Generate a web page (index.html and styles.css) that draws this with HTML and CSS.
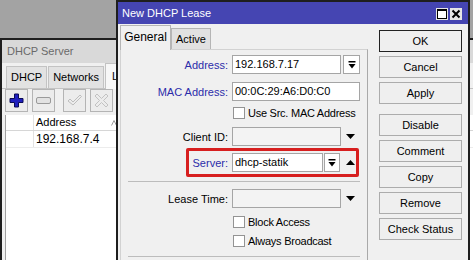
FILE: index.html
```html
<!DOCTYPE html>
<html lang="en">
<head>
  <meta charset="UTF-8">
  <meta name="viewport" content="width=device-width, initial-scale=1.0">
  <title>New DHCP Lease</title>
  <link rel="stylesheet" href="styles.css">
</head>
<body>
<div class="desktop">

  <!-- DHCP Server window, behind -->
  <div class="win server-win">
    <div class="server-title">DHCP Server</div>
    <div class="server-tabs">
      <div class="stab">DHCP</div>
      <div class="stab">Networks</div>
      <div class="stab stab-on">Leases</div>
    </div>
    <div class="server-body">
      <div class="toolbar">
        <span class="tbtn">
          <svg width="15" height="15" viewBox="0 0 15 15"><path d="M5.5 1h4v4.5H14v4H9.5V14h-4V9.5H1v-4h4.5z" fill="#1f1fbf" stroke="#0a0a55"/></svg>
        </span>
        <span class="tbtn">
          <svg width="15" height="7" viewBox="0 0 15 7"><rect x="0.5" y="0.5" width="14" height="6" rx="1.5" fill="#e2e2e2" stroke="#9a9a9a"/></svg>
        </span>
        <span class="tbtn tbtn-gap">
          <svg width="15" height="13" viewBox="0 0 15 13"><path d="M1 7l2-2 3 3 7-7 1.5 1.5L6 11z" fill="none" stroke="#bdbdbd"/></svg>
        </span>
        <span class="tbtn">
          <svg width="15" height="15" viewBox="0 0 15 15"><path d="M3 1l4.5 4.5L12 1l2 2-4.5 4.5L14 12l-2 2-4.5-4.5L3 14l-2-2 4.5-4.5L1 3z" fill="none" stroke="#c2c2c2"/></svg>
        </span>
      </div>
      <div class="grid">
        <div class="grid-head">
          <div class="cell c0"></div>
          <div class="cell c1">Address <svg class="sort" width="6" height="6" viewBox="0 0 6 6"><path d="M0.5 5.5L3 0.5l2.5 5" fill="none" stroke="#9c9c9c"/></svg></div>
          <div class="cell c2"></div>
          <div class="cell c2"></div>
          <div class="cell c2"></div>
          <div class="cell c5">Active Address</div>
        </div>
        <div class="grid-row">
          <div class="cell c0"></div>
          <div class="cell c1">192.168.7.4</div>
          <div class="cell c2"></div>
          <div class="cell c2"></div>
          <div class="cell c2"></div>
          <div class="cell c5"><span class="dot"></span></div>
        </div>
      </div>
    </div>
  </div>

  <!-- New DHCP Lease dialog -->
  <div class="win lease-win">
    <div class="lease-title">
      <span>New DHCP Lease</span>
      <span class="title-btns">
        <svg width="12" height="12" viewBox="0 0 12 12"><rect width="12" height="12" fill="#e6e6e6"/><rect x="1.5" y="1.5" width="9" height="9" fill="#fff" stroke="#000"/><rect x="1" y="1" width="10" height="2" fill="#000"/></svg>
        <svg width="12" height="12" viewBox="0 0 12 12"><rect width="12" height="12" fill="#e6e6e6"/><path d="M2.5 2.5l7 7M9.5 2.5l-7 7" stroke="#000" stroke-width="2"/></svg>
      </span>
    </div>

    <div class="lease-body">
      <div class="lease-main">
        <div class="tabs">
          <div class="tab tab-on">General</div>
          <div class="tab">Active</div>
        </div>

        <div class="panel">
          <div class="row">
            <span class="lbl blue">Address:</span>
            <div class="field">
              <div class="input w-mid">192.168.7.17</div>
              <span class="dd">
                <svg width="8" height="8" viewBox="0 0 8 8"><rect x="0.5" y="0" width="7" height="1.5"/><path d="M0.5 3h7L4 7.5z"/></svg>
              </span>
            </div>
          </div>

          <div class="row mt8">
            <span class="lbl blue">MAC Address:</span>
            <div class="field">
              <div class="input w-full">00:0C:29:A6:D0:C0</div>
            </div>
          </div>

          <div class="row mt2">
            <label class="check"><span class="box"></span>Use Src. MAC Address</label>
          </div>

          <div class="row mt5">
            <span class="lbl">Client ID:</span>
            <div class="field">
              <div class="input w-mid dim"></div>
              <span class="arrow"><svg width="9" height="5" viewBox="0 0 9 5"><path d="M0 0h9L4.5 5z"/></svg></span>
            </div>
          </div>

          <div class="row mt7 hl">
            <span class="lbl blue">Server:</span>
            <div class="field">
              <div class="input w-short">dhcp-statik</div>
              <span class="dd dd-tight">
                <svg width="8" height="8" viewBox="0 0 8 8"><rect x="0.5" y="0" width="7" height="1.5"/><path d="M0.5 3h7L4 7.5z"/></svg>
              </span>
              <span class="arrow arrow-wide"><svg width="9" height="5" viewBox="0 0 9 5"><path d="M0 5h9L4.5 0z"/></svg></span>
            </div>
          </div>

          <div class="sep mt9"></div>

          <div class="row mt7">
            <span class="lbl">Lease Time:</span>
            <div class="field">
              <div class="input w-mid dim"></div>
              <span class="arrow"><svg width="9" height="5" viewBox="0 0 9 5"><path d="M0 0h9L4.5 5z"/></svg></span>
            </div>
          </div>

          <div class="row mt4">
            <label class="check"><span class="box"></span>Block Access</label>
          </div>

          <div class="row">
            <label class="check"><span class="box"></span>Always Broadcast</label>
          </div>

          <div class="sep mt6"></div>
        </div>
      </div>

      <div class="actions">
        <button class="btn btn-default">OK</button>
        <button class="btn">Cancel</button>
        <button class="btn">Apply</button>
        <button class="btn btn-split">Disable</button>
        <button class="btn">Comment</button>
        <button class="btn">Copy</button>
        <button class="btn">Remove</button>
        <button class="btn">Check Status</button>
      </div>
    </div>
  </div>

</div>
</body>
</html>
```

FILE: styles.css
```css
body {
  margin: 0;
  font-family: "Liberation Sans", Arial, sans-serif;
  font-size: 11px;
  color: #000;
}
.desktop {
  position: relative;
  width: 473px;
  height: 260px;
  overflow: hidden;
  background: #a3a3a3;
}
.win {
  position: absolute;
  box-sizing: border-box;
  background: #f0f0f0;
}

/* DHCP Server window */
.server-win {
  left: 0;
  top: 38px;
  width: 560px;
  height: 240px;
  border: 2px solid #1e1e1e;
  border-right: none;
}
.server-title {
  height: 23px;
  line-height: 23px;
  padding-left: 5px;
  background: #d9d9d9;
  color: #6a6a6a;
}
.server-tabs {
  display: flex;
  align-items: flex-end;
  gap: 1px;
  height: 25px;
  padding-left: 4px;
}
.stab {
  box-sizing: border-box;
  height: 22px;
  line-height: 21px;
  padding: 0 4px;
  border: 1px solid #c3c3c3;
  border-bottom: none;
  background: #e2e2e2;
}
.stab-on {
  position: relative;
  height: 26px;
  line-height: 25px;
  margin-bottom: -1px;
  padding: 0 6px;
  background: #f7f7f7;
}
.server-body {
  border-top: 1px solid #c3c3c3;
  padding-left: 3px;
}
.toolbar {
  display: flex;
  gap: 4px;
  height: 23px;
}
.tbtn {
  box-sizing: border-box;
  width: 23px;
  height: 23px;
  display: flex;
  align-items: center;
  justify-content: center;
  border: 1px solid #b4b4b4;
  background: #ececec;
}
.tbtn-gap {
  margin-left: 4px;
}
.grid {
  margin-top: 3px;
  height: 200px;
  border-left: 1px solid #a0a0a0;
  background: #fff;
}
.grid-head,
.grid-row {
  display: flex;
}
.grid-head {
  height: 15px;
  border-bottom: 1px solid #d6d6d6;
}
.grid-row {
  height: 16px;
  border-bottom: 1px solid #ececec;
}
.cell {
  box-sizing: border-box;
  flex: none;
  padding-left: 2px;
  border-right: 1px solid #e2e2e2;
  white-space: nowrap;
  overflow: hidden;
  line-height: 15px;
}
.grid-row .cell {
  line-height: 16px;
  font-size: 12px;
}
.c0 { width: 28px; }
.c1 { width: 105px; position: relative; }
.c2 { width: 112px; }
.c5 { width: 120px; }
.sort {
  position: absolute;
  left: 77px;
  top: 5px;
}
.dot {
  display: inline-block;
  width: 8px;
  height: 8px;
  margin-top: 4px;
  border-radius: 50%;
  background: #3a6fc4;
}

/* New DHCP Lease dialog */
.lease-win {
  left: 116px;
  top: 0;
  width: 354px;
  height: 290px;
  border: 2px solid #1e1e1e;
}
.lease-title {
  display: flex;
  justify-content: space-between;
  align-items: center;
  height: 22px;
  padding: 0 6px 0 4px;
  background: #4545b2;
  color: #fff;
}
.title-btns {
  display: flex;
  gap: 2px;
  padding-top: 2px;
}
.lease-body {
  display: flex;
  gap: 11px;
  padding: 1px 6px 0 2px;
}
.lease-main {
  width: 248px;
}
.tabs {
  display: flex;
  align-items: flex-end;
  height: 24px;
}
.tab {
  box-sizing: border-box;
  width: 40px;
  height: 21px;
  line-height: 20px;
  text-align: center;
  border: 1px solid #b5b5b5;
  border-bottom: none;
  background: #e1e1e1;
}
.tab-on {
  position: relative;
  width: 51px;
  height: 25px;
  line-height: 22px;
  margin-bottom: -1px;
  background: #f0f0f0;
  font-size: 12px;
}
.panel {
  box-sizing: border-box;
  height: 240px;
  padding: 5px 7px 0 0;
  border: 1px solid #d2d2d2;
  border-right-color: #a9a9a9;
}
.row {
  position: relative;
  display: grid;
  grid-template-columns: 107px 128px;
  column-gap: 4px;
  align-items: center;
  height: 19px;
}
.lbl {
  text-align: right;
  white-space: nowrap;
}
.blue {
  color: #2c2caa;
}
.field {
  display: flex;
  align-items: center;
  height: 19px;
}
.input {
  box-sizing: border-box;
  height: 19px;
  padding: 0 2px;
  line-height: 17px;
  border: 1px solid #a5a5a5;
  background: #fff;
  white-space: nowrap;
  overflow: hidden;
}
.w-full { width: 128px; }
.w-mid { width: 109px; }
.w-short { width: 91px; }
.dim {
  background: #f3f3f3;
}
.dd {
  box-sizing: border-box;
  width: 17px;
  height: 19px;
  margin-left: 2px;
  display: flex;
  align-items: center;
  justify-content: center;
  border: 1px solid #a5a5a5;
  background: #fff;
}
.dd-tight {
  width: 16px;
  margin-left: 1px;
}
.arrow {
  width: 19px;
  display: flex;
  justify-content: center;
}
.arrow-wide {
  width: 20px;
}
.check {
  grid-column: 2;
  display: flex;
  align-items: center;
  gap: 3px;
  padding-left: 1px;
  white-space: nowrap;
  letter-spacing: -0.25px;
}
.box {
  box-sizing: border-box;
  width: 12px;
  height: 12px;
  border: 1px solid #939393;
  background: #fff;
}
.hl::after {
  content: "";
  position: absolute;
  left: 65px;
  top: -5px;
  width: 173px;
  height: 29px;
  box-sizing: border-box;
  border: 3px solid #d71f1f;
  border-radius: 2px;
}
.sep {
  height: 1px;
  margin-left: 7px;
  background: #bcbcbc;
}
.mt2 { margin-top: 2px; }
.mt4 { margin-top: 4px; }
.mt5 { margin-top: 5px; }
.mt6 { margin-top: 6px; }
.mt7 { margin-top: 7px; }
.mt8 { margin-top: 8px; }
.mt9 { margin-top: 9px; }

.actions {
  display: flex;
  flex-direction: column;
  gap: 4px;
  width: 83px;
  margin-top: 5px;
}
.btn {
  box-sizing: border-box;
  height: 22px;
  padding: 0;
  font: inherit;
  color: #000;
  border: 1px solid #acacac;
  background: #efefef;
  text-align: center;
}
.btn-default {
  border-color: #222;
}
.btn-split {
  margin-top: 6px;
}
```
